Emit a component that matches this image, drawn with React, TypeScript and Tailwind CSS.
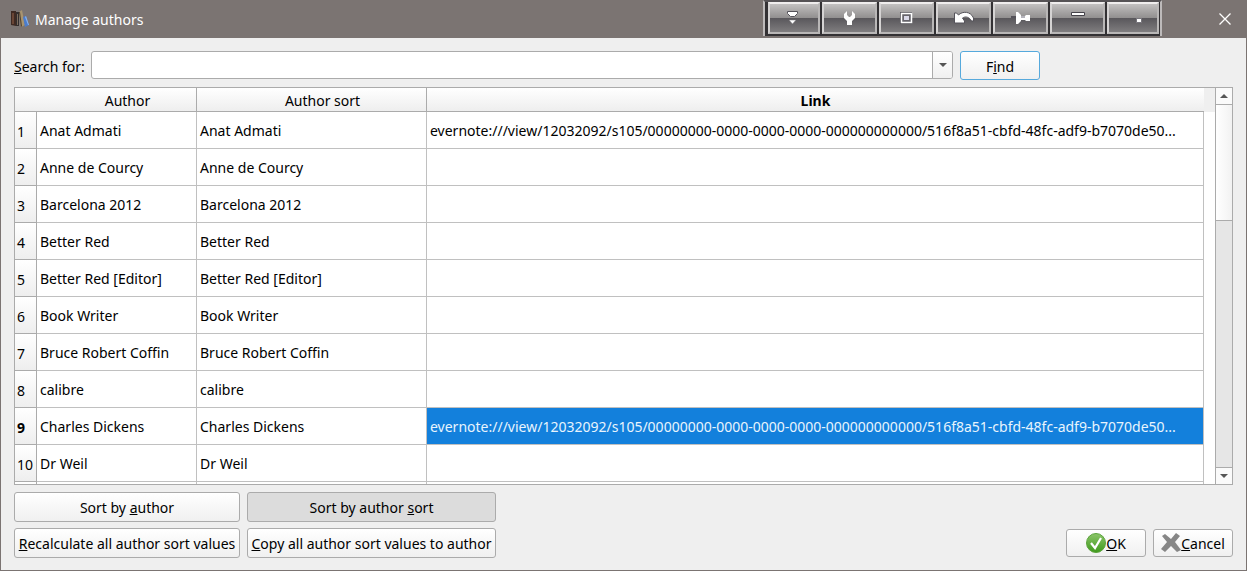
import React from 'react';

interface Author {
    name: string;
    link?: string;
    selected?: boolean;
}

const LINK = 'evernote:///view/12032092/s105/00000000-0000-0000-0000-000000000000/516f8a51-cbfd-48fc-adf9-b7070de50...';

const authors: Author[] = [
    { name: 'Anat Admati', link: LINK },
    { name: 'Anne de Courcy' },
    { name: 'Barcelona 2012' },
    { name: 'Better Red' },
    { name: 'Better Red [Editor]' },
    { name: 'Book Writer' },
    { name: 'Bruce Robert Coffin' },
    { name: 'calibre' },
    { name: 'Charles Dickens', link: LINK, selected: true },
    { name: 'Dr Weil' },
];

const BooksIcon = () => (
    <svg className="size-5 shrink-0" viewBox="0 0 20 20" aria-hidden="true">
        <path d="M2 2h5v15l-5-1z" fill="#3f2a23" />
        <path d="M3 4h2v11H3z" fill="#6a4636" />
        <path d="M7 3h3v14H7z" fill="#332e2e" />
        <path d="M8 5h1v11H8z" fill="#7d6c5d" />
        <path d="M10 3l3-2 3 15-4 2z" fill="#a8946f" />
        <path d="M10 3l1 0 2 14-1 1z" fill="#54432f" />
        <path d="M14 8l3-1 3 9-4 2z" fill="#4b7ccb" />
        <path d="M16 8l1-1 3 9-1 0z" fill="#8db4ea" />
    </svg>
);

const titleTools = [
    {
        label: 'Roll up',
        icon: (
            <>
                <path d="M3.500 3.500h10v2l-3 3h-4l-3-3z" fill="#fff" stroke="#55535a" />
                <path d="M5 12h7l-3.500 4z" fill="#fff" stroke="#77757a" strokeWidth="0.500" />
            </>
        ),
    },
    {
        label: 'Settings',
        icon: <path d="M4 6l3-3v4l2 2h1l2-2V3l3 3v4l-3 3v4H7v-4l-3-3z" fill="#fff" />,
    },
    {
        label: 'Fit',
        icon: (
            <>
                <path d="M3 4h12v12H3z" fill="#55535a" />
                <path d="M4.500 5.500h10v9h-10z" fill="#66646b" stroke="#fff" strokeWidth="1.500" />
                <path d="M7 8h5v4H7z" fill="#d9d8e8" />
            </>
        ),
    },
    {
        label: 'Undo',
        icon: (
            <path d="M0.500 5h2l2 2c4-4 12-4 15 3v3h-2c-2-4-6-5-9-3l2 3v2h-10z" fill="#fff" stroke="#55535a" />
        ),
    },
    {
        label: 'Pin',
        icon: (
            <>
                <path d="M0 8h5v2H0z" fill="#55535a" />
                <path d="M5 4h2l3 3v1h4l1-1h4v6h-4l-1-1h-4v1l-3 3H5z" fill="#fff" />
                <path d="M10 8h4v2h-4z" fill="#b5b4bc" />
            </>
        ),
    },
    {
        label: 'Minimize',
        icon: <path d="M3.500 4.500h13v3h-13z" fill="#fff" stroke="#45434a" />,
    },
    {
        label: 'Shrink',
        icon: <path d="M13.500 10.500h5v4h-5z" fill="#fff" stroke="#77757c" />,
    },
];

const TitleBar = () => (
    <header className="flex h-[38px] shrink-0 items-center bg-[#7b7472] pl-[9px] text-white">
        <BooksIcon />
        <h1 className="ml-[6px] flex-1 pt-[2px] text-sm">Manage authors</h1>
        <div className="mr-[41px] flex h-[36px] gap-[2px] self-start border-x-2 border-t-2 border-x-[#bdbaba] border-t-[#555255] bg-[#333134] pr-px pb-[2px] pl-[3px]">
            {titleTools.map(({ label, icon }) => (
                <button
                    key={label}
                    type="button"
                    aria-label={label}
                    className="flex w-[55px] items-center justify-center border-2 border-t-[#efeded] border-r-[#b9b7b7] border-b-[#b9b7b7] border-l-[#d5d3d3] bg-linear-to-b from-[#c2c0c0] via-[#918f8f] via-50% to-[#7f7d7f] first:w-[52px] last:w-[52px]"
                >
                    <span className="flex h-full w-full items-center justify-center bg-linear-to-b from-transparent from-50% via-[#59575b] via-50% to-[#7f7d7f]">
                        <svg className="size-5" viewBox="0 0 20 20" aria-hidden="true">
                            {icon}
                        </svg>
                    </span>
                </button>
            ))}
        </div>
        <button type="button" aria-label="Close" className="flex h-full w-11 items-center justify-center">
            <svg className="size-3" viewBox="0 0 12 12" aria-hidden="true">
                <path d="M0.500 0.500l11 11M11.500 0.500l-11 11" stroke="#fff" strokeWidth="1.300" />
            </svg>
        </button>
    </header>
);

const Arrow = ({ up = false }: { up?: boolean }) => (
    <svg className="h-[4px] w-[8px]" viewBox="0 0 8 4" aria-hidden="true">
        <path d={up ? 'M0 4L4 0 8 4z' : 'M0 0l4 4L8 0z'} fill="#555" />
    </svg>
);

interface DialogButtonProps {
    className?: string;
    pressed?: boolean;
    children: React.ReactNode;
}

const DialogButton: React.FC<DialogButtonProps> = ({ className = '', pressed, children }) => (
    <button
        type="button"
        aria-pressed={pressed}
        className={`flex items-center justify-center rounded-[3px] border whitespace-nowrap [&>span]:pt-[2px] ${
            pressed ? 'bg-[#dcdcdc]' : 'bg-linear-to-b from-white to-[#f0f0f0]'
        } ${className}`}
    >
        {children}
    </button>
);

const SearchBar = () => (
    <form className="flex items-start">
        <label htmlFor="search" className="mt-[6px] w-[77px] whitespace-nowrap">
            <u>S</u>earch for:
        </label>
        <div className="flex h-7 flex-1 overflow-hidden rounded-[3px] border border-[#ababab] bg-white">
            <input id="search" type="text" className="min-w-0 flex-1 px-1 outline-none" />
            <button
                type="button"
                aria-label="Search history"
                className="flex w-5 items-center justify-center border-l border-[#ababab] bg-linear-to-b from-white to-[#f0f0f0]"
            >
                <Arrow />
            </button>
        </div>
        <DialogButton className="mr-[193px] ml-[7px] h-[29px] w-20 border-[#56a9dc]">
            <span>F<u>i</u>nd</span>
        </DialogButton>
    </form>
);

const headCell = 'h-6 border-b border-[#ababab] bg-linear-to-b from-white to-[#eeeeee] p-0 pt-[2px] leading-5';
const bodyCell = 'truncate border-r border-b border-[#c0c0c0] px-[3px] pt-[2px] pb-0';

const AuthorTable = () => (
    <table className="w-full table-fixed border-separate border-spacing-0">
        <colgroup>
            <col className="w-[22px]" />
            <col className="w-[160px]" />
            <col className="w-[230px]" />
            <col />
        </colgroup>
        <thead>
            <tr>
                <td className={headCell} />
                <th scope="col" className={`${headCell} border-r pl-[22px] font-normal`}>Author</th>
                <th scope="col" className={`${headCell} border-r pl-[22px] font-normal`}>Author sort</th>
                <th scope="col" className={`${headCell} font-bold`}>Link</th>
            </tr>
        </thead>
        <tbody>
            {authors.map(({ name, link, selected }, i) => (
                <tr key={name} className="h-[37px]">
                    <th
                        scope="row"
                        className={`border-r border-b border-[#ababab] bg-linear-to-b from-white to-[#eeeeee] p-0 pt-1 pl-[2px] text-left ${
                            selected ? 'font-bold' : 'font-normal'
                        }`}
                    >
                        {i + 1}
                    </th>
                    <td className={bodyCell}>{name}</td>
                    <td className={bodyCell}>{name}</td>
                    <td className={`${bodyCell} ${selected ? 'bg-[#1380dc] text-[#e8f4fd]' : ''}`}>{link}</td>
                </tr>
            ))}
            <tr className="h-[37px]">
                <th className="border-r border-[#ababab] bg-white" />
                <td className="border-r border-[#c0c0c0]" />
                <td className="border-r border-[#c0c0c0]" />
                <td className="border-r border-[#c0c0c0]" />
            </tr>
        </tbody>
    </table>
);

const ScrollBar = () => (
    <div className="flex w-[17px] shrink-0 flex-col border-l border-[#ababab] bg-[#e6e6e6]">
        <button type="button" aria-label="Scroll up" className="flex h-[17px] items-center justify-center border-b border-[#ababab] bg-[#fafafa]">
            <Arrow up />
        </button>
        <div className="flex-1">
            <div className="h-[32%] border-b border-[#ababab] bg-linear-to-r from-white to-[#f2f2f2]" />
        </div>
        <button type="button" aria-label="Scroll down" className="flex h-[17px] items-center justify-center border-t border-[#ababab] bg-[#fafafa]">
            <Arrow />
        </button>
    </div>
);

const OkIcon = () => (
    <svg className="size-5" viewBox="0 0 20 20" aria-hidden="true">
        <defs>
            <linearGradient id="ok" x2="0" y2="1">
                <stop stopColor="#8cc56a" />
                <stop offset="1" stopColor="#3f9a1c" />
            </linearGradient>
        </defs>
        <circle cx="10" cy="10" r="9.500" fill="url(#ok)" stroke="#5ba33c" />
        <path d="M5 10l4 5 6-10" fill="none" stroke="#fff" strokeWidth="2.200" />
    </svg>
);

const CancelIcon = () => (
    <svg className="size-5" viewBox="0 0 20 20" aria-hidden="true">
        <path d="M4 1l6 5 5-6 4 3-5 6 6 8-4 2-6-6-6 6-4-3 6-7-5-6z" fill="#868686" />
    </svg>
);

const Footer = () => (
    <footer className="mt-[7px] flex items-end justify-between">
        <div className="grid grid-cols-[226px_249px] gap-x-[7px] gap-y-[6px]">
            <DialogButton className="h-[30px] border-[#ababab]">
                <span>Sort by <u>a</u>uthor</span>
            </DialogButton>
            <DialogButton pressed className="h-[30px] border-[#ababab]">
                <span>Sort by author <u>s</u>ort</span>
            </DialogButton>
            <DialogButton className="h-[30px] border-[#ababab]">
                <span><u>R</u>ecalculate all author sort values</span>
            </DialogButton>
            <DialogButton className="h-[30px] border-[#ababab]">
                <span><u>C</u>opy all author sort values to author</span>
            </DialogButton>
        </div>
        <div className="flex gap-[7px] pb-px">
            <DialogButton className="h-7 w-20 border-[#ababab]">
                <OkIcon />
                <span><u>O</u>K</span>
            </DialogButton>
            <DialogButton className="h-7 w-20 border-[#ababab]">
                <CancelIcon />
                <span><u>C</u>ancel</span>
            </DialogButton>
        </div>
    </footer>
);

const App = () => (
    <div className="flex h-screen flex-col bg-[#efefef] font-['Noto_Sans','Open_Sans',sans-serif] text-sm text-black">
        <TitleBar />
        <main className="flex min-h-0 flex-1 flex-col border-x border-b border-[#7b7472] px-[13px] pt-[13px] pb-3">
            <SearchBar />
            <div className="mt-[7px] flex min-h-0 flex-1 overflow-hidden border border-[#ababab] bg-white">
                <div className="min-w-0 flex-1 overflow-hidden">
                    <AuthorTable />
                </div>
                <div className="h-6 w-[11px] bg-[#efefef]" />
                <ScrollBar />
            </div>
            <Footer />
        </main>
    </div>
);

export default App;
